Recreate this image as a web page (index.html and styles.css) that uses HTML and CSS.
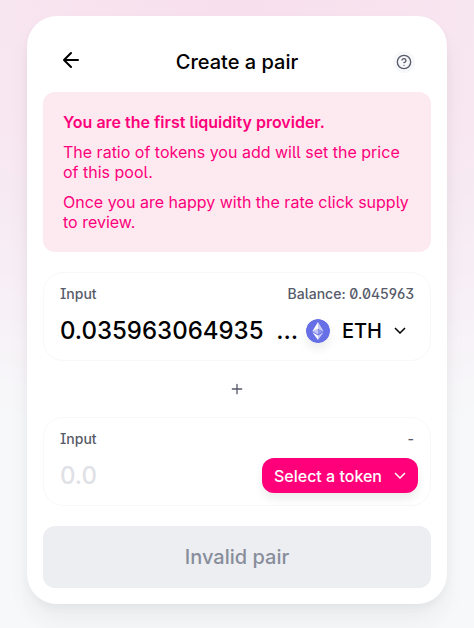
FILE: index.html
```html
<!DOCTYPE html>
<html lang="en">
<head>
<meta charset="utf-8">
<meta name="viewport" content="width=device-width, initial-scale=1">
<title>Create a pair</title>
<link rel="stylesheet" href="styles.css">
</head>
<body>
<main class="card">
  <header class="header">
    <a class="back" href="#" aria-label="Back">
      <svg width="24" height="24" viewBox="0 0 24 24" fill="none" stroke="currentColor" stroke-width="2" stroke-linecap="round" stroke-linejoin="round"><path d="M19 12H5M12 19l-7-7 7-7"/></svg>
    </a>
    <h1 class="title">Create a pair</h1>
    <button class="help" type="button" aria-label="Help">
      <svg width="16" height="16" viewBox="0 0 24 24" fill="none" stroke="currentColor" stroke-width="2" stroke-linecap="round" stroke-linejoin="round"><circle cx="12" cy="12" r="10"/><path d="M9.09 9a3 3 0 0 1 5.83 1c0 2-3 3-3 3M12 17h.01"/></svg>
    </button>
  </header>

  <section class="notice">
    <p class="notice-title">You are the first liquidity provider.</p>
    <p>The ratio of tokens you add will set the price of this pool.</p>
    <p>Once you are happy with the rate click supply to review.</p>
  </section>

  <form class="form">
    <section class="panel">
      <div class="panel-labels">
        <label for="amount-a">Input</label>
        <span>Balance: 0.045963</span>
      </div>
      <div class="panel-row">
        <input class="amount" id="amount-a" type="text" inputmode="decimal" placeholder="0.0" value="0.035963064935&nbsp;&nbsp;…">
        <button class="token" type="button">
          <svg class="token-logo" width="24" height="24" viewBox="0 0 24 24"><circle cx="12" cy="12" r="12" fill="#627eea"/><circle cx="12" cy="12" r="12" fill="#6a5fe0" opacity=".5"/><path d="M12 3v6.650l5.620 2.510z" fill="#fff" opacity=".65"/><path d="M12 3l-5.620 9.160L12 9.650z" fill="#fff"/><path d="M12 16.480V21l5.620-7.780z" fill="#fff" opacity=".65"/><path d="M12 21v-4.520l-5.620-3.260z" fill="#fff"/><path d="M12 15.430l5.620-3.270L12 9.650z" fill="#fff" opacity=".25"/><path d="M6.380 12.160L12 15.430V9.650z" fill="#fff" opacity=".6"/></svg>
          <span class="token-name">ETH</span>
          <svg class="chevron" width="12" height="7" viewBox="0 0 12 7" fill="none" stroke="currentColor" stroke-width="1.5"><path d="M1 1l5 5 5-5"/></svg>
        </button>
      </div>
    </section>

    <div class="plus">
      <svg width="16" height="16" viewBox="0 0 24 24" fill="none" stroke="currentColor" stroke-width="2" stroke-linecap="round"><path d="M12 5v14M5 12h14"/></svg>
    </div>

    <section class="panel">
      <div class="panel-labels">
        <label for="amount-b">Input</label>
        <span>-</span>
      </div>
      <div class="panel-row">
        <input class="amount" id="amount-b" type="text" inputmode="decimal" placeholder="0.0">
        <button class="token token-empty" type="button">
          <span class="token-prompt">Select a token</span>
          <svg class="chevron" width="12" height="7" viewBox="0 0 12 7" fill="none" stroke="currentColor" stroke-width="1.5"><path d="M1 1l5 5 5-5"/></svg>
        </button>
      </div>
    </section>

    <button class="submit" type="submit" disabled>Invalid pair</button>
  </form>
</main>
</body>
</html>
```
FILE: styles.css
```css
* {
  box-sizing: border-box;
}

body {
  margin: 0;
  min-height: 100vh;
  padding: 16px;
  font-family: Inter, "Liberation Sans", sans-serif;
  font-size: 16px;
  color: #000;
  background: radial-gradient(150% 70% at 50% 0, rgba(255, 0, 122, 0.1), rgba(255, 0, 122, 0.06) 55%, rgba(255, 0, 122, 0)) no-repeat #f7f8fa;
}

h1,
p {
  margin: 0;
}

button,
input {
  font-family: inherit;
  border: 0;
  margin: 0;
  outline: none;
}

button {
  cursor: pointer;
}

svg {
  display: block;
  flex: none;
}

.card {
  max-width: 420px;
  margin: 0 auto;
  padding: 16px;
  border-radius: 30px;
  background: #fff;
  box-shadow: 0 0 1px rgba(0, 0, 0, 0.01), 0 4px 8px rgba(0, 0, 0, 0.04),
    0 16px 24px rgba(0, 0, 0, 0.04), 0 24px 32px rgba(0, 0, 0, 0.01);
}

.header {
  display: grid;
  grid-template-columns: 24px 1fr 24px;
  align-items: center;
  height: 60px;
  padding: 0 16px;
}

.back {
  color: #000;
  padding-bottom: 4px;
}

.title {
  font-size: 20px;
  font-weight: 500;
  text-align: center;
}

.help {
  display: flex;
  justify-self: end;
  padding: 3px;
  border-radius: 50%;
  background: #f7f8fa;
  color: #565a69;
}

.notice {
  display: grid;
  gap: 10px;
  padding: 20px;
  border-radius: 12px;
  background: #fdeaf1;
  color: #ff007a;
  line-height: 20px;
  font-feature-settings: "ss02";
}

.notice-title {
  font-weight: 600;
}

.form {
  display: grid;
  gap: 20px;
  margin-top: 20px;
}

.panel {
  border: 1px solid #f7f8fa;
  border-radius: 20px;
}

.panel-labels {
  display: flex;
  justify-content: space-between;
  padding: 12px 16px 0;
  color: #565a69;
  font-size: 14px;
  font-weight: 500;
  line-height: 18px;
  font-feature-settings: "ss01", "ss02", "zero", "cv01", "cv08";
}

.panel-row {
  display: flex;
  align-items: center;
  padding: 10px 12px 12px 16px;
}

.amount {
  flex: 1;
  min-width: 0;
  width: 0;
  padding: 0;
  background: none;
  color: #000;
  font-size: 24px;
  font-weight: 500;
}

.amount::placeholder {
  color: #dfe1e6;
  opacity: 1;
}

.token {
  display: flex;
  align-items: center;
  height: 35px;
  padding: 0 8px;
  border-radius: 12px;
  background: #fff;
  color: #000;
  font-size: 20px;
  font-weight: 500;
}

.token-logo {
  border-radius: 50%;
  box-shadow: 0 6px 10px rgba(0, 0, 0, 0.075);
}

.token-name {
  margin: 0 4px 0 12px;
}

.token-prompt {
  margin: 0 4px;
}

.token-empty {
  background: #ff007a;
  color: #fff;
  font-size: 16px;
  box-shadow: 0 6px 10px rgba(0, 0, 0, 0.075);
}

.chevron {
  margin: 0 4px 0 8px;
}

.plus {
  display: flex;
  justify-content: center;
  color: #565a69;
}

.submit {
  height: 62px;
  border-radius: 12px;
  background: #edeef2;
  color: #888d9b;
  font-size: 20px;
  font-weight: 500;
  cursor: auto;
}
```
